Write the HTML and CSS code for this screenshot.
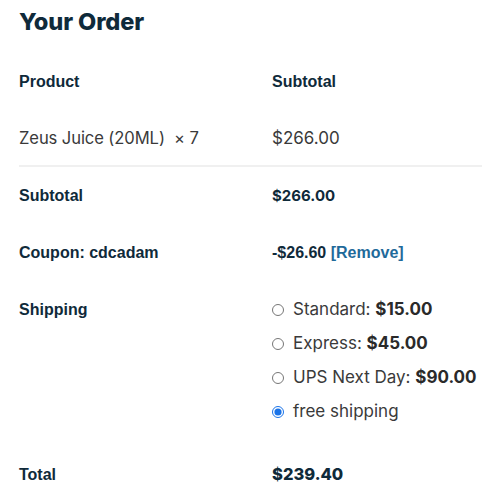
FILE: index.html
```html
<!DOCTYPE html>
<html lang="en">
<head>
<meta charset="utf-8">
<title>Your Order</title>
<link rel="stylesheet" href="styles.css">
</head>
<body>
<h2 class="title">Your Order</h2>
<div class="order">
  <div class="row head">
    <div class="label">Product</div>
    <div class="label">Subtotal</div>
  </div>
  <div class="row item">
    <div class="text name">Zeus Juice (20ML)&nbsp; × 7</div>
    <div class="text">$266.00</div>
  </div>
  <div class="row">
    <div class="label">Subtotal</div>
    <div class="amount">$266.00</div>
  </div>
  <div class="row">
    <div class="label">Coupon: cdcadam</div>
    <div class="label">-$26.60 <a class="remove" href="#">[Remove]</a></div>
  </div>
  <div class="row shipping">
    <div class="label">Shipping</div>
    <ul class="methods">
      <li><label class="method"><input type="radio" name="ship"> <span>Standard: <b>$15.00</b></span></label></li>
      <li><label class="method"><input type="radio" name="ship"> <span>Express: <b>$45.00</b></span></label></li>
      <li><label class="method"><input type="radio" name="ship"> <span>UPS Next Day: <b>$90.00</b></span></label></li>
      <li><label class="method"><input type="radio" name="ship" checked> <span>free shipping</span></label></li>
    </ul>
  </div>
  <div class="row">
    <div class="label">Total</div>
    <div class="amount total">$239.40</div>
  </div>
</div>
</body>
</html>
```
FILE: styles.css
```css
html, body {
  margin: 0;
  padding: 0;
  background: #fff;
}
body {
  padding: 7px 0 0 19px;
  font-family: "Liberation Sans", Arial, sans-serif;
  color: #0f2a3a;
}
.title {
  margin: 0 0 17px;
  font-family: Inter, sans-serif;
  font-weight: 800;
  font-size: 23.6px;
  line-height: 30px;
  color: #0f2a3a;
  letter-spacing: -0.1px;
}
.order {
  display: flex;
  flex-direction: column;
}
.row {
  display: grid;
  grid-template-columns: 253px 1fr;
  padding: 18px 0;
  line-height: 21px;
}
.row.head {
  padding: 17px 0;
}
.row.item {
  padding: 19px 0 16px;
  border-bottom: 2px solid #f0f0f0;
}
.row.shipping {
  padding-bottom: 24px;
}
.label {
  font-weight: 700;
  font-size: 16px;
  color: #0f2a3a;
}
.text {
  font-family: Inter, sans-serif;
  font-size: 17px;
  color: #3a3a3a;
}
.text.name {
  font-size: 16.6px;
  letter-spacing: -0.1px;
}
.amount {
  font-family: Inter, sans-serif;
  font-weight: 700;
  font-size: 15px;
  color: #0f2a3a;
}
.amount.total {
  font-size: 16.5px;
  font-weight: 800;
}
.remove {
  color: #1f6a9a;
  text-decoration: none;
}
.methods {
  list-style: none;
  margin: 0;
  padding: 0;
  display: flex;
  flex-direction: column;
  gap: 13px;
}
.method {
  display: flex;
  align-items: center;
  font-family: Inter, sans-serif;
  font-size: 17px;
  color: #3a3a3a;
}
.method input {
  width: 12px;
  height: 12px;
  margin: 0 9px 0 0;
  accent-color: #1a73e8;
}
.method b {
  font-weight: 700;
  color: #2a2a2a;
}
```
